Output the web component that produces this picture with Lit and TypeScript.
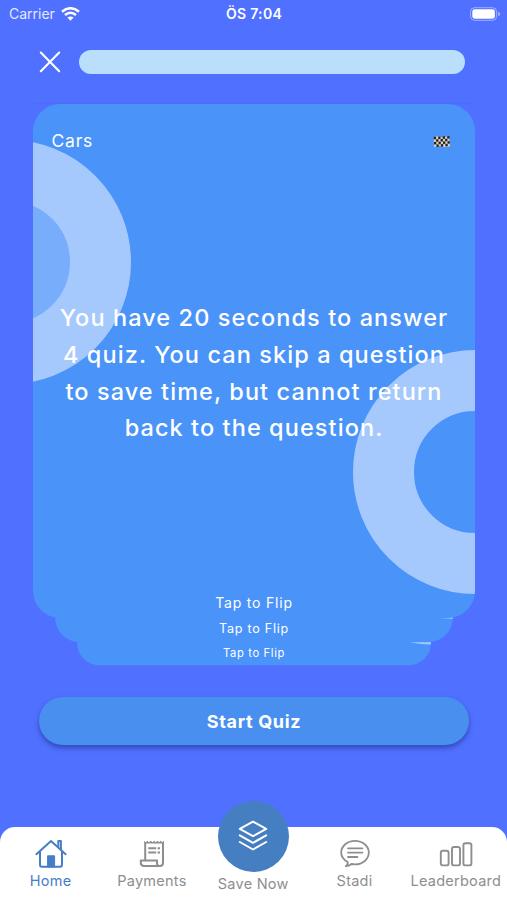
import { LitElement, html, css, svg } from "lit";
import { customElement, property } from "lit/decorators.js";

const wifiIcon = html`<svg width="19" height="14" viewBox="0 0 19 14" fill="none" stroke="#fff" stroke-width="2.5">
  <path d="M1 4.7Q9.5 -2.2 18 4.7" /><path d="M4 8Q9.5 3.4 15 8" />
  <path d="M6.4 10.6Q9.5 8.2 12.6 10.6L9.5 13.8Z" fill="#fff" stroke="none" />
</svg>`;

const batteryIcon = html`<svg width="31" height="14" viewBox="0 0 31 14" fill="none">
  <rect x="0.6" y="0.7" width="26" height="12.6" rx="4" stroke="#fff" stroke-opacity=".45" />
  <rect x="2.3" y="2.3" width="22.6" height="9.4" rx="2.4" fill="#fff" />
  <path d="M28.2 4.8Q30.2 5.5 30.2 7T28.2 9.2Z" fill="#fff" fill-opacity=".5" />
</svg>`;

const closeIcon = html`<svg width="22" height="22" viewBox="0 0 22 22" stroke="#fff" stroke-width="2.1" stroke-linecap="round">
  <path d="M1.8 1.6L20.2 20.2M20.2 1.6L1.8 20.2" />
</svg>`;

const squares = Array.from({ length: 28 }, (_, i) => ({ c: i % 7, r: Math.floor(i / 7) }));
const flagIcon = html`<svg width="18" height="13" viewBox="0 0 18 13">
  <path d="M.6 2.2Q4 .8 8 1.9T16 .8L17 11.2Q13 12.6 9.5 11.4T1.2 12.2Z" fill="#d8d3c8" />
  ${squares
    .filter((s) => (s.c + s.r) % 2 === 0)
    .map((s) => svg`<rect x=${0.7 + s.c * 2.25 + s.r * 0.15} y=${1.8 + s.r * 2.55 - s.c * 0.12} width="2.3" height="2.5" fill="#28231f" />`)}
</svg>`;

const homeIcon = html`<svg width="32" height="30" viewBox="0 0 32 30" fill="none" stroke="currentColor" stroke-width="2" stroke-linejoin="round" stroke-linecap="round">
  <path d="M1.4 15.2L16 2L30.6 15.2" />
  <path d="M5 13V25.8Q5 27.7 6.9 27.7H25.1Q27 27.7 27 25.8V13" />
  <path d="M23.3 7.6V2H25.9V10.2" />
  <path d="M12.6 27.5V16.8H19.6V27.5Z" fill="currentColor" stroke-width="1" />
</svg>`;

const receiptIcon = html`<svg width="26" height="30" viewBox="0 0 26 30" fill="none" stroke="currentColor" stroke-width="2" stroke-linejoin="round">
  <path d="M6.2 20.6V3.4M24 3.4V23.8Q24 27.1 20.8 27.1H5.2Q1.8 27.1 1.8 24V21.4H18V24.2Q18 27.1 20.8 27.1" />
  <path d="M5.2 1.8L6.8 3.2L8.4 1.8L10.1 3.2L11.8 1.8L13.5 3.2L15.1 1.8L16.7 3.2L18.4 1.8L20 3.2L21.7 1.8L23.3 3.2L25 1.8V4.6H5.2Z" fill="currentColor" stroke="none" />
  <path d="M9.2 9.2H17.2M9.2 13.6H17.2M18.6 9.2H21M18.6 13.6H21" />
</svg>`;

const layersIcon = html`<svg width="30" height="32" viewBox="0 0 30 32" fill="none" stroke="#fff" stroke-width="2" stroke-linejoin="round" stroke-linecap="round">
  <path d="M15 1.6L28.2 8.9L15 16.2L1.8 8.9Z" />
  <path d="M1.8 15.4L15 22.8L28.2 15.4M1.8 22L15 29.5L28.2 22" />
</svg>`;

const chatIcon = html`<svg width="30" height="30" viewBox="0 0 30 30" fill="none" stroke="currentColor" stroke-width="1.8" stroke-linejoin="round" stroke-linecap="round">
  <path d="M5.8 27.2Q8.2 25.6 7.7 23C3.8 21 1.2 17.6 1.2 13.6C1.2 7 7.4 1.8 15 1.8S28.8 7 28.8 13.6S22.6 25.4 15 25.4Q13.2 25.4 11.4 25Q9 27 5.8 27.2Z" />
  <path d="M8 9.3H22.4M8 13.6H22.4M8 18H17.4" />
</svg>`;

const barsIcon = html`<svg width="34" height="30" viewBox="0 0 34 30" fill="none" stroke="currentColor" stroke-width="1.9">
  <rect x="1.8" y="11.8" width="7.8" height="14.6" rx="2" /><rect x="13" y="8" width="8" height="18.4" rx="2" />
  <rect x="24.4" y="4.2" width="8" height="22.2" rx="2" />
</svg>`;

@customElement("quiz-card")
class QuizCard extends LitElement {
  @property() topic = "";
  static styles = css`
    :host { display: block; box-sizing: border-box; }
    .card {
      position: relative; overflow: hidden; box-sizing: border-box; height: 100%;
      border-radius: 27px; background: #4993f9; color: #fff;
      display: grid; grid-template-rows: 73px 1fr 31px;
    }
    .ring { position: absolute; box-sizing: border-box; width: 244px; height: 244px; border-radius: 50%; border: 61px solid #a5c9fd; }
    .left { left: -146.5px; top: 36.5px; background: #78adfc; }
    .right { left: 320px; top: var(--ring-top, 246.5px); }
    .head { position: relative; display: flex; justify-content: space-between; align-items: center; padding: 0 24px 0 18.5px; font-size: 17.5px; letter-spacing: .8px; }
    .head svg { margin-top: 2px; }
    .body { position: relative; display: flex; align-items: center; justify-content: center; text-align: center; font-size: 23.5px; line-height: 36.7px; letter-spacing: 1.08px; white-space: nowrap; padding-bottom: 16px; font-weight: 450; }
    .foot { position: relative; text-align: center; font-size: 14px; letter-spacing: .8px; line-height: 31px; }
  `;
  render() {
    return html`<div class="card">
      <div class="ring left"></div><div class="ring right"></div>
      <div class="head"><span>${this.topic}</span>${flagIcon}</div>
      <div class="body"><slot></slot></div>
      <div class="foot">Tap to Flip</div>
    </div>`;
  }
}

@customElement("app-root")
class AppRoot extends LitElement {
  static styles = css`
    :host {
      display: flex; flex-direction: column; box-sizing: border-box; width: 507px; height: 900px; overflow: hidden;
      background: #5070ff; font-family: Inter, "Noto Sans", sans-serif; color: #fff;
    }
    svg { display: block; flex: none; }
    .status { display: grid; grid-template-columns: 1fr auto 1fr; align-items: center; height: 27px; padding: 0 6px 0 7px; font-size: 14px; }
    .carrier { display: flex; align-items: center; gap: 6px; color: #e4e9ff; padding-left: 2px; }
    .clock { font-weight: 600; letter-spacing: .3px; }
    .battery { justify-self: end; }
    .top { display: flex; align-items: center; gap: 18px; height: 24px; margin: 23px 42px 0 39px; }
    .progress { flex: 1; height: 24px; border-radius: 12px; background: #badffc; }
    .deck { display: grid; grid-template: 514.5px / 442px; margin: 29.5px auto 0 33px; box-shadow: 0 -0.5px 0 #4b69ee; }
    .deck quiz-card { grid-area: 1 / 1; transform-origin: 50% 100%; }
    .second { transform: translateY(23.2px) scale(.9); --ring-top: 245px; }
    .third { transform: translateY(46.3px) scale(.8); --ring-top: 245px; }
    .start {
      margin: 79px 38px 0 39px; height: 48px; border: 0; border-radius: 24px; background: #498ff0; color: #fff;
      font: 700 18px/48px Inter, sans-serif; letter-spacing: .65px; box-shadow: 0 3px 5px rgba(20, 35, 120, .5);
    }
    .nav {
      margin-top: auto; height: 73.5px; border-radius: 15px 15px 0 0; background: #fff; color: #8e8e8e;
      display: grid; grid-template-columns: repeat(5, 101.3px); font-size: 14.5px; letter-spacing: .25px;
    }
    .item { display: flex; flex-direction: column; align-items: center; padding-top: 12px; gap: 3px; line-height: 18px; white-space: nowrap; }
    .active { color: #467ec6; }
    .main { padding-top: 0; gap: 3px; margin-top: -26px; }
    .bubble { width: 71px; height: 71px; border-radius: 50%; background: #467ec2; display: grid; place-items: center; flex: none; }
  `;
  render() {
    return html`
      <div class="status">
        <div class="carrier"><span>Carrier</span>${wifiIcon}</div>
        <div class="clock">ÖS 7:04</div>
        <div class="battery">${batteryIcon}</div>
      </div>
      <div class="top">${closeIcon}<div class="progress"></div></div>
      <div class="deck">
        <quiz-card class="third"></quiz-card>
        <quiz-card class="second"></quiz-card>
        <quiz-card topic="Cars">
          <div>You have 20 seconds to answer<br />4 quiz. You can skip a question<br />to save time, but cannot return<br />back to the question.</div>
        </quiz-card>
      </div>
      <button class="start">Start Quiz</button>
      <nav class="nav">
        <div class="item active">${homeIcon}<span>Home</span></div>
        <div class="item">${receiptIcon}<span>Payments</span></div>
        <div class="item main"><div class="bubble">${layersIcon}</div><span>Save Now</span></div>
        <div class="item">${chatIcon}<span>Stadi</span></div>
        <div class="item">${barsIcon}<span>Leaderboard</span></div>
      </nav>
    `;
  }
}
